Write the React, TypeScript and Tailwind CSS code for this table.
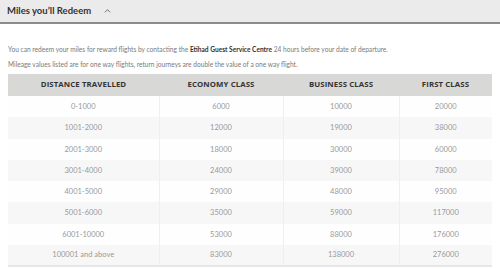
import React from "react";

const rows: string[][] = [
  ["0-1000", "6000", "10000", "20000"],
  ["1001-2000", "12000", "19000", "38000"],
  ["2001-3000", "18000", "30000", "60000"],
  ["3001-4000", "24000", "39000", "78000"],
  ["4001-5000", "29000", "48000", "95000"],
  ["5001-6000", "35000", "59000", "117000"],
  ["6001-10000", "53000", "88000", "176000"],
  ["100001 and above", "83000", "138000", "276000"],
];

const headers = ["DISTANCE TRAVELLED", "ECONOMY CLASS", "BUSINESS CLASS", "FIRST CLASS"];
const widths = ["w-[151px]", "w-[124px]", "w-[116px]", "w-[93px]"];

export default function App() {
  return (
    <div className="h-[269px] w-[500px] bg-white font-['Lato',sans-serif]">
      {/* accordion header */}
      <div className="flex h-6 items-center gap-[13px] border-b-2 border-[#8c8c8c] bg-[#ebebeb] pl-[7px]">
        <span className="text-[9.5px] font-bold text-[#333]">Miles you’ll Redeem</span>
        <svg viewBox="0 0 10 6" className="h-[4px] w-[7px]" fill="none" stroke="#666" strokeWidth="1.4">
          <path d="M1 5l4-4 4 4" />
        </svg>
      </div>

      <div className="px-2 pt-[18px] text-[6.6px] leading-[15px] text-[#7a7a7a]">
        <p>
          You can redeem your miles for reward flights by contacting the{" "}
          <b className="text-[#333]">Etihad Guest Service Centre</b> 24 hours before your date of departure.
        </p>
        <p>Mileage values listed are for one way flights, return journeys are double the value of a one way flight.</p>
      </div>

      <table className="mx-2 mt-[2px] border-collapse border-b-2 border-[#e6e6e6] text-center">
        <thead>
          <tr className="h-[22px] bg-[#d8d8d6]">
            {headers.map((h, i) => (
              <th
                key={h}
                className={`${widths[i]} p-0 font-['Open_Sans',sans-serif] text-[7.8px] font-bold tracking-[0.1px] text-[#333]`}
              >
                {h}
              </th>
            ))}
          </tr>
        </thead>
        <tbody>
          {rows.map((r, i) => (
            <tr key={i} className={`h-[21.25px] ${i % 2 ? "bg-[#f7f7f7]" : "bg-[#fefefe]"}`}>
              {r.map((c, j) => (
                <td
                  key={j}
                  className={`p-0 text-[7.5px] text-[#999] ${j < 3 ? "border-r border-[#efefef]" : ""}`}
                >
                  {c}
                </td>
              ))}
            </tr>
          ))}
        </tbody>
      </table>
    </div>
  );
}
